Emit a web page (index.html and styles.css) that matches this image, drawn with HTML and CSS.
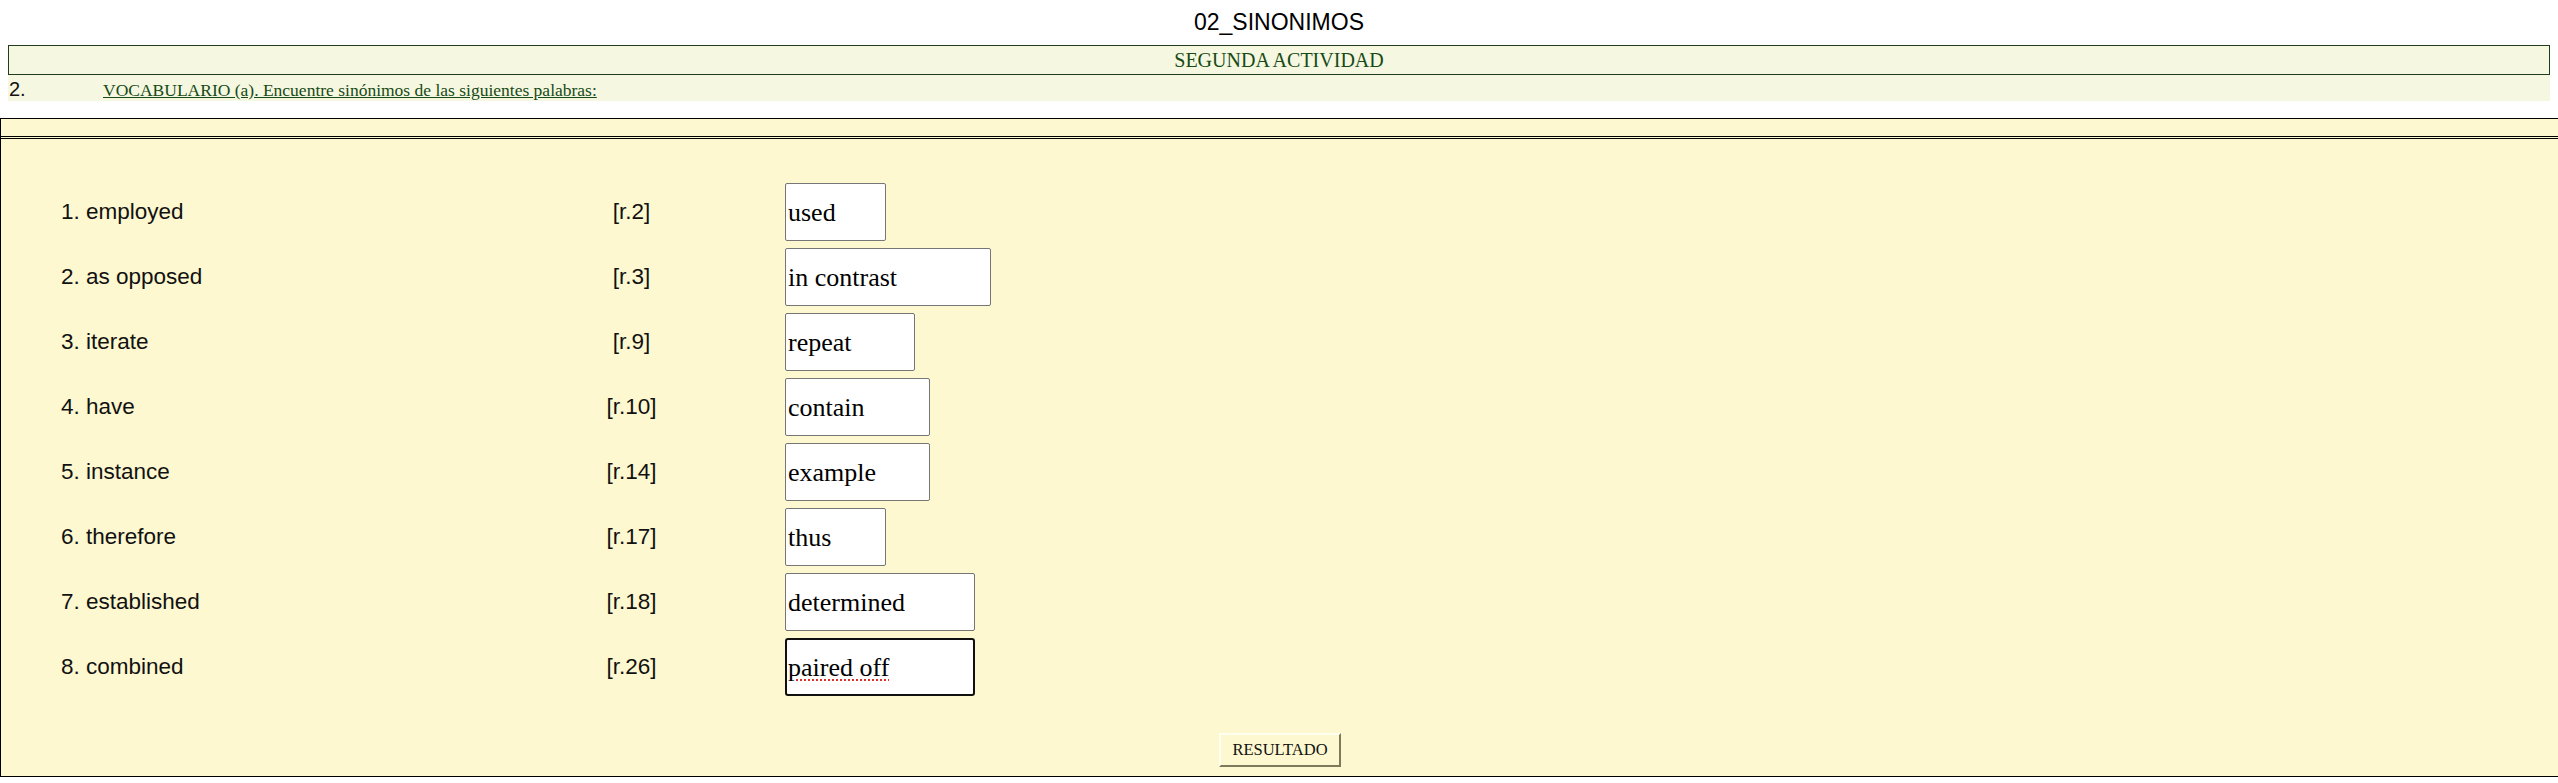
FILE: index.html
```html
<!DOCTYPE html>
<html lang="es">
<head>
<meta charset="utf-8">
<title>02_SINONIMOS</title>
<link rel="stylesheet" href="styles.css">
</head>
<body>
<h1 class="title">02_SINONIMOS</h1>
<section class="activity">
  <div class="activity-head">SEGUNDA ACTIVIDAD</div>
  <div class="activity-task">
    <span class="task-num">2.</span>
    <span class="task-text">VOCABULARIO (a). Encuentre sinónimos de las siguientes palabras:</span>
  </div>
</section>
<form class="panel">
  <div class="panel-head"></div>
  <div class="panel-body">
    <div class="vocab">
      <span class="word">1. employed</span><span class="ref">[r.2]</span><input class="answer size-s" value="used">
      <span class="word">2. as opposed</span><span class="ref">[r.3]</span><input class="answer size-xxl" value="in contrast">
      <span class="word">3. iterate</span><span class="ref">[r.9]</span><input class="answer size-m" value="repeat">
      <span class="word">4. have</span><span class="ref">[r.10]</span><input class="answer size-l" value="contain">
      <span class="word">5. instance</span><span class="ref">[r.14]</span><input class="answer size-l" value="example">
      <span class="word">6. therefore</span><span class="ref">[r.17]</span><input class="answer size-s" value="thus">
      <span class="word">7. established</span><span class="ref">[r.18]</span><input class="answer size-xl" value="determined">
      <span class="word">8. combined</span><span class="ref">[r.26]</span><input class="answer size-xl is-focused" value="paired off">
    </div>
    <div class="actions">
      <button type="button" class="result-btn">RESULTADO</button>
    </div>
  </div>
</form>
</body>
</html>
```

FILE: styles.css
```css
html {
  overflow-x: hidden;
}

body {
  margin: 0;
  background: #ffffff;
  color: #111111;
  font-family: "Liberation Sans", Arial, sans-serif;
}

.title {
  margin: 0;
  padding-top: 9px;
  font-size: 23px;
  line-height: 26px;
  font-weight: normal;
  text-align: center;
  color: #000000;
}

.activity {
  margin: 10px 8px 0;
}

.activity-head {
  border: 1px solid #1f3d1a;
  background: #f5f7e0;
  padding: 3px 0;
  text-align: center;
  font-family: "Liberation Serif", "Times New Roman", serif;
  font-size: 20px;
  line-height: 22px;
  color: #174a17;
}

.activity-task {
  display: flex;
  align-items: baseline;
  height: 26px;
  box-sizing: border-box;
  padding: 2px 0 0 1px;
  background: #f5f7e0;
  line-height: 24px;
}

.task-num {
  flex: none;
  width: 94px;
  font-family: "Liberation Sans", Arial, sans-serif;
  font-size: 20px;
  color: #111111;
}

.task-text {
  font-family: "Liberation Serif", "Times New Roman", serif;
  font-size: 17.5px;
  color: #174a17;
  text-decoration: underline;
}

.panel {
  margin: 17px 0 0;
  width: 100%;
  border: 1px solid #000000;
  background: #fdf8cf;
}

.panel-head {
  height: 17px;
  border-bottom: 1px solid #000000;
}

.panel-body {
  margin-top: 1px;
  border-top: 1px solid #000000;
  padding: 44px 0 9px;
}

.vocab {
  display: grid;
  grid-template-columns: 470px 201px 1fr;
  row-gap: 7px;
  align-items: center;
  padding-left: 60px;
}

.word {
  font-size: 22.5px;
  color: #111111;
}

.ref {
  font-size: 22.5px;
  text-align: center;
  color: #111111;
}

.answer {
  justify-self: start;
  margin-left: 53px;
  box-sizing: border-box;
  height: 58px;
  padding: 2px 2px 0;
  border: 1px solid #767676;
  border-radius: 2px;
  background: #ffffff;
  color: #000000;
  font-family: "Liberation Serif", "Times New Roman", serif;
  font-size: 26px;
}

.size-s { width: 101px; }
.size-m { width: 130px; }
.size-l { width: 145px; }
.size-xl { width: 190px; }
.size-xxl { width: 206px; }

.answer.is-focused {
  border: 2px solid #101010;
  border-radius: 3px;
  padding: 1px 1px 0;
  outline: none;
  text-decoration: underline dotted #e0302a;
  text-decoration-thickness: 2px;
  text-underline-offset: 4px;
}

.actions {
  margin-top: 37px;
  text-align: center;
}

.result-btn {
  box-sizing: border-box;
  width: 122px;
  height: 34px;
  padding: 0;
  border: 2px solid;
  border-color: #fffff0 #7d7a5c #7d7a5c #fffff0;
  background: #fdf8cf;
  color: #111111;
  font-family: "Liberation Serif", "Times New Roman", serif;
  font-size: 16.5px;
}
```
